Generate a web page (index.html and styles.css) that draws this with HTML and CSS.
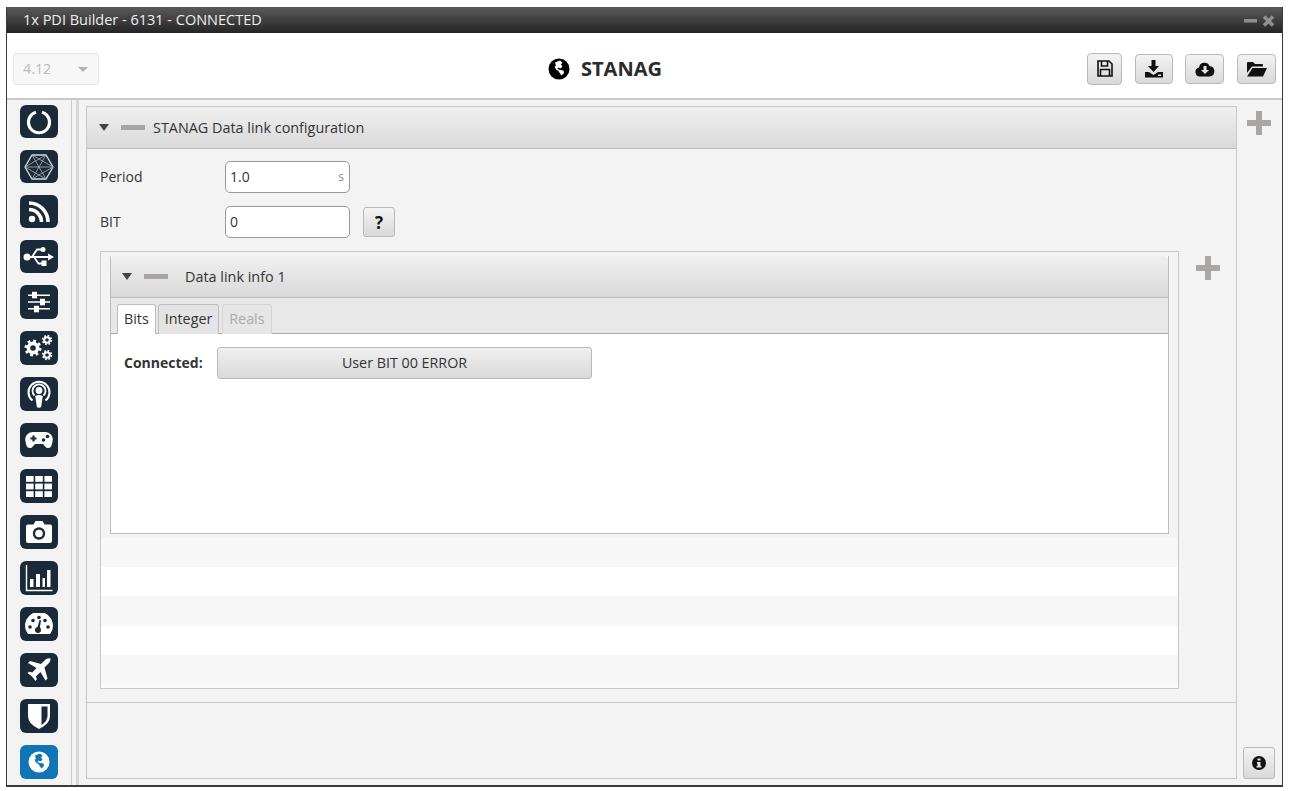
FILE: index.html
```html
<!DOCTYPE html>
<html lang="en">
<head>
<meta charset="utf-8">
<title>1x PDI Builder</title>
<link rel="stylesheet" href="styles.css">
</head>
<body>
<div class="window">
  <div class="titlebar">
    <span class="title-text">1x PDI Builder - 6131 - CONNECTED</span>
    <div class="win-controls">
      <svg width="34" height="12" viewBox="0 0 34 12"><rect x="2" y="4" width="13" height="3.500" fill="#8f8f8f"/><path d="M22 1.500l9 9M31 1.500l-9 9" stroke="#8f8f8f" stroke-width="3.600"/></svg>
    </div>
  </div>
  <header class="header">
    <div class="version"><span>4.12</span><i class="caret-light"></i></div>
    <div class="page-title">
      <svg class="globe" width="22" height="22" viewBox="0 0 22 22"><circle cx="11" cy="11" r="10.500" fill="#000"/><path d="M7 4.500l5-2 2.500 2-1.500 2 1.500 2-2 2-2.500-1-.5 1.500 2.500 1 3.500.5.500 2.500-2.500 2.500-1.500-2-1.500-2.500-2.500-1.500-1.500-3 1.500-.5z" fill="#fff"/></svg>
      <span>STANAG</span>
    </div>
    <div class="toolbar">
      <button class="tool tool-save"><svg width="16" height="17" viewBox="0 0 16 17"><path d="M1 1h11l3 3v12H1zM4.500 1.500v4.500h6V1.500M3.500 15.500V9.500h9v6" fill="none" stroke="#111" stroke-width="1.600"/></svg></button>
      <button class="tool tool-dl"><svg width="20" height="18" viewBox="0 0 20 18"><path d="M7.500 0h4v6h3.500l-5.500 6-5.500-6h3.500zM1 12h4l4.500 3 4.500-3h5v5.500H1z" fill="#111"/><rect x="14" y="14.500" width="3" height="1.500" fill="#ddd"/></svg></button>
      <button class="tool tool-cloud"><svg width="20" height="16" viewBox="0 0 20 16"><path d="M5 15.500a4.500 4.500 0 0 1-1-8.900 5.500 5.500 0 0 1 10.500-1.600A5.300 5.300 0 0 1 15 15.500z" fill="#111"/><path d="M8.500 5h3v4h2.500l-4 4-4-4h2.500z" fill="#e4e4e4"/></svg></button>
      <button class="tool tool-open"><svg width="20" height="16" viewBox="0 0 20 16"><path d="M0 2q0-1 1-1h5l2 2h7q1 0 1 1v1.500H5L0 12z" fill="#111"/><path d="M5.500 7H20l-4 8.500H0z" fill="#111"/></svg></button>
    </div>
  </header>
  <div class="body">
    <nav class="sidebar">
      <a class="nav short"><svg width="28" height="28" viewBox="0 0 28 28"><path d="M11 4.200a10.500 10.500 0 1 0 6 0" fill="none" stroke="#fff" stroke-width="3.200"/></svg></a>
      <a class="nav short"><svg width="30" height="28" viewBox="0 0 30 28" fill="none" stroke="#aab0b5" stroke-width=".8"><path d="M8 2h14l7 12-7 12H8L1 14z" stroke="#d8dbdd" stroke-width="1.300"/><path d="M8 2l14 24M22 2L8 26M1 14h28M8 2l21 12M22 2L1 14M8 26l21-12M22 26L1 14"/></svg></a>
      <a class="nav short"><svg width="22" height="22" viewBox="0 0 22 22"><circle cx="4" cy="18" r="3.200" fill="#fff"/><path d="M1 8.500A12.500 12.500 0 0 1 13.500 21M1 2a19 19 0 0 1 19 19" fill="none" stroke="#fff" stroke-width="3.600"/></svg></a>
      <a class="nav short"><svg width="32" height="24" viewBox="0 0 32 24"><circle cx="4" cy="12" r="3.500" fill="#fff"/><path d="M4 12h22M9 12l5-7.500h4M11 12l4.500 6.500H19" fill="none" stroke="#fff" stroke-width="1.800"/><circle cx="20" cy="4.500" r="2.500" fill="#fff"/><rect x="18.500" y="15.500" width="5" height="5.500" fill="#fff"/><path d="M25 8.500l6 3.500-6 3.500z" fill="#fff"/></svg></a>
      <a class="nav"><svg width="24" height="24" viewBox="0 0 24 24" fill="#fff"><path d="M1 4.500h22v1.400H1zM1 11.300h22v1.400H1zM1 18.100h22v1.400H1z"/><rect x="5" y="1.800" width="5" height="6.500"/><rect x="13" y="8.800" width="5" height="6.500"/><rect x="7" y="15.800" width="5" height="6.500"/></svg></a>
      <a class="nav"><svg width="32" height="30" viewBox="0 0 32 30" fill="none" stroke="#fff"><circle cx="10" cy="15" r="4.600" stroke-width="3.600"/><circle cx="10" cy="15" r="7.200" stroke-width="2.600" stroke-dasharray="2.800 2.850"/><circle cx="24" cy="7" r="2.800" stroke-width="2"/><circle cx="24" cy="7" r="4.300" stroke-width="1.800" stroke-dasharray="1.700 1.680"/><circle cx="24" cy="22" r="2.800" stroke-width="2"/><circle cx="24" cy="22" r="4.300" stroke-width="1.800" stroke-dasharray="1.700 1.680"/></svg></a>
      <a class="nav"><svg width="24" height="30" viewBox="0 0 24 30" fill="none" stroke="#fff"><path d="M5.500 21.500a10.500 10.500 0 1 1 13 0" stroke-width="2"/><path d="M7.500 16.500a6.500 6.500 0 1 1 9 0" stroke-width="1.800"/><circle cx="12" cy="11.500" r="3.400" fill="#fff" stroke="none"/><path d="M8.300 17.500q0-1.500 3.700-1.500t3.700 1.500l-1.500 10q-.2 1.200-2.200 1.200t-2.200-1.200z" fill="#fff" stroke="none"/></svg></a>
      <a class="nav"><svg width="28" height="18" viewBox="0 0 28 18"><path d="M7.500 1h13a7.500 7.500 0 0 1 7 9.500l-.8 3.500a3.600 3.600 0 0 1-6.500 1.500L18 13h-8l-2.200 2.500A3.600 3.600 0 0 1 1.300 14l-.8-3.500A7.500 7.500 0 0 1 7.500 1z" fill="#fff"/><path d="M5.500 7.500h6M8.500 4.500v6" stroke="#1b2a38" stroke-width="2.200"/><circle cx="18.500" cy="9" r="1.800" fill="#1b2a38"/><circle cx="22.500" cy="5.500" r="1.800" fill="#1b2a38"/></svg></a>
      <a class="nav"><svg width="26" height="21" viewBox="0 0 26 21" fill="#fff"><rect width="7.600" height="5.800"/><rect x="9.200" width="7.600" height="5.800"/><rect x="18.400" width="7.600" height="5.800"/><rect y="7.600" width="7.600" height="5.800"/><rect x="9.200" y="7.600" width="7.600" height="5.800"/><rect x="18.400" y="7.600" width="7.600" height="5.800"/><rect y="15.200" width="7.600" height="5.800"/><rect x="9.200" y="15.200" width="7.600" height="5.800"/><rect x="18.400" y="15.200" width="7.600" height="5.800"/></svg></a>
      <a class="nav"><svg width="26" height="24" viewBox="0 0 26 22"><path d="M2 3.500h5.500L9.500 0h7l2 3.500H24q2 0 2 2V20q0 2-2 2H2q-2 0-2-2V5.500q0-2 2-2z" fill="#fff"/><circle cx="13" cy="12.500" r="5" fill="none" stroke="#1b2a38" stroke-width="2.400"/></svg></a>
      <a class="nav"><svg width="28" height="28" viewBox="0 0 28 28"><path d="M1.500 1v25.500H27.500" fill="none" stroke="#fff" stroke-width="1.400"/><rect x="5" y="15" width="3.500" height="8" fill="#fff"/><rect x="11" y="10" width="4" height="13" fill="#fff"/><rect x="17.500" y="14" width="2.500" height="9" fill="#fff"/><rect x="22" y="6" width="3.500" height="17" fill="#fff"/></svg></a>
      <a class="nav"><svg width="28" height="22" viewBox="0 0 28 22"><path d="M3 20.500A13.500 13.500 0 1 1 25 20.500z" fill="#fff" stroke="#fff"/><g fill="#1b2a38"><circle cx="5" cy="14" r="1.800"/><circle cx="8" cy="7.500" r="1.800"/><circle cx="14" cy="4.500" r="1.800"/><circle cx="20" cy="7.500" r="1.800"/><circle cx="23" cy="14" r="1.800"/><circle cx="13" cy="17" r="3"/><path d="M12 16l2.500-9 1.500.5-1.500 9z"/></g></svg></a>
      <a class="nav"><svg width="24" height="24" viewBox="0 0 24 24"><path d="M23.500.5c-1.800-.8-4 0-5.500 1.500l-4 4L3 3 1 5l8.500 5-4.200 4.500-3.300-.8L.5 15l4.500 3.500L8.500 23l1.300-1.500-.8-3.300 4.500-4.200 5 8.500 2-2-3-11 4-4c1.500-1.500 2.300-3.700 2-5.500z" fill="#fff"/></svg></a>
      <a class="nav"><svg width="22" height="26" viewBox="0 0 22 26"><path d="M0 1h22v12q0 8-11 13Q0 21 0 13z" fill="#fff"/><path d="M13.500 3.500H19.500V13q0 5-6 9z" fill="#1b2a38"/></svg></a>
      <a class="nav active"><svg width="22" height="22" viewBox="0 0 22 22"><circle cx="11" cy="11" r="10.500" fill="#fff"/><path d="M7 4.500l5-2 2.500 2-1.500 2 1.500 2-2 2-2.500-1-.5 1.500 2.500 1 3.500.5.500 2.500-2.500 2.500-1.500-2-1.500-2.500-2.500-1.500-1.500-3 1.500-.5z" fill="#0f75b4"/></svg></a>
    </nav>
    <div class="splitter"></div>
    <main class="main">
      <section class="panel">
        <div class="panel-body">
          <div class="bar bar-outer">
            <i class="caret"></i><i class="dash"></i><span>STANAG Data link configuration</span>
          </div>
          <div class="form">
            <div class="form-row">
              <label>Period</label>
              <div class="field"><span>1.0</span><span class="unit">s</span></div>
            </div>
            <div class="form-row">
              <label>BIT</label>
              <div class="field"><span>0</span></div>
              <button class="help">?</button>
            </div>
            <div class="nested-row">
              <div class="nested">
                <section class="info">
                  <div class="bar bar-inner">
                    <i class="caret"></i><i class="dash"></i><span>Data link info 1</span>
                  </div>
                  <div class="tabs">
                    <span class="tab selected">Bits</span>
                    <span class="tab">Integer</span>
                    <span class="tab disabled">Reals</span>
                  </div>
                  <div class="tab-content">
                    <strong>Connected:</strong>
                    <button class="bit-button">User BIT 00 ERROR</button>
                  </div>
                </section>
                <div class="stripes">
                  <div class="stripe odd"></div>
                  <div class="stripe"></div>
                  <div class="stripe odd"></div>
                  <div class="stripe"></div>
                  <div class="stripe odd"></div>
                  <div class="stripe tail"></div>
                </div>
              </div>
              <div class="plus-col"><i class="plus"></i></div>
            </div>
          </div>
        </div>
        <div class="panel-foot"></div>
      </section>
      <aside class="rail">
        <i class="plus"></i>
        <button class="info-btn"><svg width="14" height="14" viewBox="0 0 14 14"><circle cx="7" cy="7" r="7" fill="#111"/><path d="M5.500 2.500h3v2h-3zM5 6h3.500v4h1v1.500h-5V10h1V7.500H5z" fill="#e4e4e4"/></svg></button>
      </aside>
    </main>
  </div>
</div>
</body>
</html>
```
FILE: styles.css
```css
* { box-sizing: border-box; }
html, body { margin: 0; padding: 0; height: 100%; background: #fff; }
body {
  padding: 7px 7px 4px 6px;
  font-family: "Open Sans", "Noto Sans", sans-serif;
  font-size: 14.3px;
  color: #333;
}
button { font-family: inherit; font-size: 14.3px; color: #333; padding: 0; }
.window {
  height: 780px;
  display: flex;
  flex-direction: column;
  border: 1px solid #3a3a3a;
  border-top: 0;
  border-bottom-width: 2px;
  background: #f3f3f3;
}
.titlebar {
  height: 26px;
  flex: none;
  display: flex;
  align-items: center;
  justify-content: space-between;
  padding: 0 6px 0 16px;
  background: linear-gradient(#5a5a5a, #242424);
  color: #eee;
}
.title-text { font-size: 14.5px; padding-bottom: 2px; }
.win-controls { display: flex; margin-top: 2px; }
.header {
  height: 67px;
  flex: none;
  display: flex;
  align-items: center;
  justify-content: space-between;
  padding: 0 6px 0 6px;
  background: #fff;
  border-bottom: 2px solid #c9c9c9;
  position: relative;
}
.version {
  width: 86px;
  height: 32px;
  margin-top: 7px;
  display: flex;
  align-items: center;
  justify-content: space-between;
  padding: 0 10px 2px 9px;
  border: 1px solid #e6e6e6;
  border-radius: 3px;
  background: #f7f7f7;
  color: #bcbcbc;
}
.caret-light {
  width: 0; height: 0;
  border: 5px solid transparent;
  border-top: 5px solid #b4b4b4;
  border-bottom: 0;
  margin-top: 3px;
}
.page-title {
  position: absolute;
  left: 541px;
  top: 23px;
  display: flex;
  align-items: center;
  gap: 11px;
  font-size: 20px;
  line-height: 26px;
  font-weight: 700;
  color: #2b2b2b;
}
.toolbar { display: flex; align-items: center; gap: 13px; margin-top: 6px; }
.tool {
  width: 39px;
  height: 30px;
  display: flex;
  align-items: center;
  justify-content: center;
  border: 1px solid #b9b9b9;
  border-radius: 4px;
  background: linear-gradient(#f3f3f3, #d9d9d9);
}
.tool-save { width: 35px; height: 32px; }
.tool-dl { width: 38px; }
.tool-cloud { margin-left: -1px; }
.body { flex: 1; display: flex; min-height: 0; }
.sidebar {
  width: 65px;
  flex: none;
  display: flex;
  flex-direction: column;
  align-items: center;
  gap: 12px;
  padding: 5px 0 0 0;
  border-right: 1px solid #c9c9c9;
}
.nav {
  width: 38px;
  height: 34px;
  flex: none;
  display: flex;
  align-items: center;
  justify-content: center;
  background: #1b2a38;
  border-radius: 6px;
}
.nav.short { height: 33px; }
.nav.active { background: #0f75b4; }
.splitter {
  width: 7px;
  flex: none;
  background: #f3f3f3;
  border-right: 3px solid #d8d8d8;
}
.main { flex: 1; display: flex; padding: 6px 0 6px 7px; min-width: 0; }
.panel {
  flex: 1;
  display: flex;
  flex-direction: column;
  border: 1px solid #c8c8c8;
  min-width: 0;
}
.panel-body {
  height: 596px;
  flex: none;
  border-bottom: 1px solid #c8c8c8;
}
.bar {
  display: flex;
  align-items: center;
  background: linear-gradient(#f0f0f0, #d9d9d9);
  border-bottom: 1px solid #bdbdbd;
  color: #333;
  font-size: 14.4px;
}
.bar-outer { height: 42px; padding-left: 12px; }
.bar-inner {
  height: 42px;
  padding-left: 11px;
  border-radius: 3px 3px 0 0;
}
.caret {
  width: 0; height: 0;
  border: 5.500px solid transparent;
  border-top: 7px solid #444;
  border-bottom: 0;
}
.dash {
  width: 24px;
  height: 5px;
  background: #a8a4a4;
  margin: 0 8px 0 12px;
}
.bar-inner .dash { margin-right: 17px; }
.form { padding: 12px 0 0 13px; }
.form-row { display: flex; align-items: center; height: 32px; margin-bottom: 13px; }
.form-row label { width: 125px; font-size: 14px; padding-bottom: 2px; }
.field {
  width: 125px;
  height: 32px;
  display: flex;
  align-items: center;
  justify-content: space-between;
  padding: 0 5px 2px 4px;
  border: 1px solid #9a9a9a;
  border-radius: 5px;
  background: #fff;
  font-size: 14px;
}
.unit { font-size: 12px; color: #888; }
.help {
  width: 32px;
  height: 30px;
  margin-left: 13px;
  border: 1px solid #b9b9b9;
  border-radius: 3px;
  background: linear-gradient(#f3f3f3, #d9d9d9);
  font-weight: 700;
  font-size: 17px;
  color: #111;
}
.nested-row { display: flex; }
.nested {
  width: 1079px;
  height: 438px;
  flex: none;
  border: 1px solid #c8c8c8;
  padding: 4px 9px 0 9px;
}
.info { height: 278px; border: 1px solid #bdbdbd; border-top: 0; background: #fff; }
.tabs {
  height: 36px;
  display: flex;
  align-items: flex-end;
  gap: 2px;
  padding-left: 6px;
  background: #e8e8e8;
  border-bottom: 1px solid #aaa;
}
.tab {
  height: 30px;
  padding: 0 6px 2px;
  display: flex;
  align-items: center;
  border: 1px solid #bdbdbd;
  border-bottom: 0;
  border-radius: 3px 3px 0 0;
  background: #e4e4e4;
  margin-bottom: -1px;
}
.tab.selected { background: #fff; }
.tab.disabled { color: #aaa; margin-left: 1px; border-color: #d4d4d4; background: #e6e6e6; }
.tab-content { display: flex; align-items: center; padding: 13px 0 0 13px; }
.tab-content strong { width: 93px; font-weight: 700; font-size: 14px; padding-bottom: 2px; }
.bit-button {
  width: 375px;
  height: 32px;
  padding-bottom: 2px;
  border: 1px solid #b9b9b9;
  border-radius: 3px;
  background: linear-gradient(#f0f0f0, #d9d9d9);
}
.stripes { margin: 4px -9px 0; }
.stripe { height: 29.200px; background: #fff; }
.stripe.odd { background: #f7f7f7; }
.stripe.tail { height: 4px; background: #fbfbfb; }
.plus-col { padding: 5px 0 0 17px; }
.plus { display: block; width: 24px; height: 24px; background:
  linear-gradient(#aaa6a6, #aaa6a6) center / 24px 6px no-repeat,
  linear-gradient(#aaa6a6, #aaa6a6) center / 6px 24px no-repeat; }
.panel-foot { flex: 1; }
.rail {
  width: 45px;
  flex: none;
  display: flex;
  flex-direction: column;
  align-items: center;
  justify-content: space-between;
  padding: 5px 1px 0 0;
}
.info-btn {
  width: 32px;
  height: 32px;
  display: flex;
  align-items: center;
  justify-content: center;
  border: 1px solid #b9b9b9;
  border-radius: 3px;
  background: linear-gradient(#f3f3f3, #d9d9d9);
}
```
